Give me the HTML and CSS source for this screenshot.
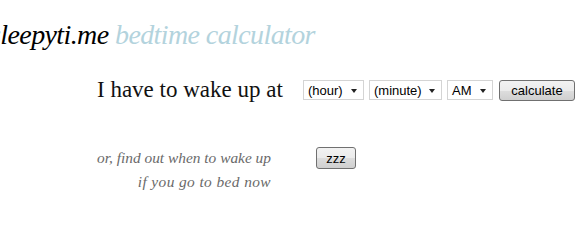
FILE: index.html
```html
<!DOCTYPE html>
<html>
<head>
<meta charset="utf-8">
<link rel="stylesheet" href="styles.css">
</head>
<body>
<h1 class="title"><span class="brand">sleepyti.me</span> <span class="sub">bedtime calculator</span></h1>
<div class="wake-row">
  <span class="wake-label">I have to wake up at</span>
  <div class="controls">
    <span class="sel sel-hour">(hour)<i class="arrow"></i></span>
    <span class="sel sel-min">(minute)<i class="arrow"></i></span>
    <span class="sel sel-ampm">AM<i class="arrow"></i></span>
    <button class="btn btn-calc">calculate</button>
  </div>
</div>
<div class="now-row">
  <div class="now-label"><span class="line1">or, find out when to wake up</span><br><span class="line2">if you go to bed now</span></div>
  <button class="btn btn-zzz">zzz</button>
</div>
</body>
</html>
```
FILE: styles.css
```css
html, body { margin: 0; padding: 0; background: #fff; }
body { width: 583px; height: 213px; overflow: hidden; font-family: "Liberation Serif", serif; }
.title { margin: 0; padding-top: 19px; margin-left: -10px; font-weight: normal; font-style: italic; font-size: 28px; line-height: 32px; letter-spacing: -0.6px; white-space: nowrap; }
.brand { color: #000; }
.sub { color: #b3d3dd; }
.wake-row { display: flex; align-items: center; margin-top: 26px; padding-left: 97px; }
.wake-label { font-size: 23px; color: #111; width: 206px; }
.controls { display: flex; gap: 5px; align-items: center; }
.sel { position: relative; display: flex; align-items: center; height: 18px; border: 1px solid #d4d4d4; background: #fff; font-family: "Liberation Sans", sans-serif; font-size: 13px; color: #000; padding-left: 4px; box-sizing: content-box; }
.sel-hour { width: 55px; }
.sel-min { width: 67px; }
.sel-ampm { width: 40px; }
.arrow { position: absolute; right: 6px; top: 8px; width: 0; height: 0; border-left: 3.5px solid transparent; border-right: 3.5px solid transparent; border-top: 4px solid #222; }
.btn { font-family: "Liberation Sans", sans-serif; font-size: 13px; color: #000; border: 1px solid #707070; border-radius: 3px; background: linear-gradient(#f2f2f2 0%, #ebebeb 50%, #dddddd 51%, #cfcfcf 100%); padding: 0; height: 21px; }
.btn-calc { width: 76px; margin-left: 1px; }
.now-row { display: flex; align-items: flex-start; margin-top: 43px; padding-left: 92px; }
.now-label { font-style: italic; font-size: 15.4px; line-height: 24px; color: #6a6a6a; text-align: right; width: 179px; white-space: nowrap; }
.line2 { letter-spacing: 0.4px; }
.btn-zzz { width: 40px; height: 22px; margin-left: 45px; margin-top: 1px; }
```
